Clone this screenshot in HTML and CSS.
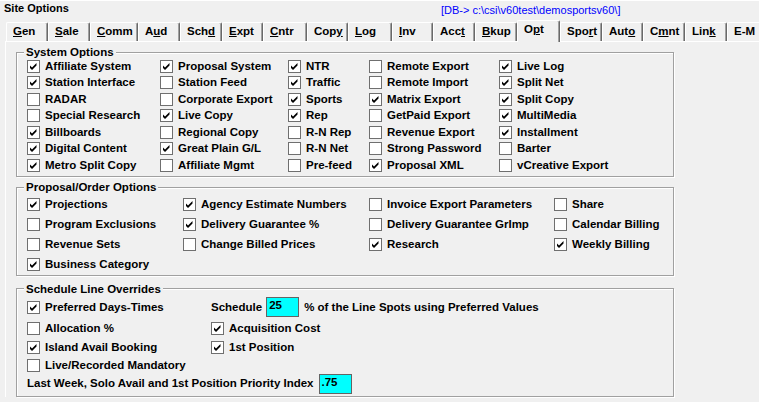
FILE: index.html
```html
<!DOCTYPE html>
<html>
<head>
<meta charset="utf-8">
<link rel="stylesheet" href="styles.css">
</head>
<body>
<div class="window">
  <div class="header">
    <div class="title">Site Options</div>
    <div class="path">[DB-&gt; c:\csi\v60test\demosportsv60\]</div>
  </div>
  <div class="tabs">
    <div class="tab w42"><u>G</u>en</div>
    <div class="tab w42"><u>S</u>ale</div>
    <div class="tab w48"><u>C</u>omm</div>
    <div class="tab w42">A<u>u</u>d</div>
    <div class="tab w42">Sch<u>d</u></div>
    <div class="tab w41"><u>E</u>xpt</div>
    <div class="tab w44"><u>C</u>ntr</div>
    <div class="tab w41">Cop<u>y</u></div>
    <div class="tab w44"><u>L</u>og</div>
    <div class="tab w41"><u>I</u>nv</div>
    <div class="tab w42">Acc<u>t</u></div>
    <div class="tab w42"><u>B</u>kup</div>
    <div class="tab w43 active">O<u>p</u>t</div>
    <div class="tab w42">Spo<u>r</u>t</div>
    <div class="tab w41">Aut<u>o</u></div>
    <div class="tab w42">C<u>m</u>nt</div>
    <div class="tab w42">Lin<u>k</u></div>
    <div class="tab w42">E-M</div>
  </div>
  <div class="panel">
    <div class="group g1">
      <div class="legend">System Options</div>
      <div class="grid sys">
        <label class="opt"><span class="cb"><svg viewBox="0 0 11 11"><polygon points="2,4.5 4,6.5 8.5,2 8.5,4.5 4,9 2,7"/></svg></span>Affiliate System</label>
        <label class="opt"><span class="cb"><svg viewBox="0 0 11 11"><polygon points="2,4.5 4,6.5 8.5,2 8.5,4.5 4,9 2,7"/></svg></span>Proposal System</label>
        <label class="opt"><span class="cb"><svg viewBox="0 0 11 11"><polygon points="2,4.5 4,6.5 8.5,2 8.5,4.5 4,9 2,7"/></svg></span>NTR</label>
        <label class="opt"><span class="cb"></span>Remote Export</label>
        <label class="opt"><span class="cb"><svg viewBox="0 0 11 11"><polygon points="2,4.5 4,6.5 8.5,2 8.5,4.5 4,9 2,7"/></svg></span>Live Log</label>

        <label class="opt"><span class="cb"><svg viewBox="0 0 11 11"><polygon points="2,4.5 4,6.5 8.5,2 8.5,4.5 4,9 2,7"/></svg></span>Station Interface</label>
        <label class="opt"><span class="cb"></span>Station Feed</label>
        <label class="opt"><span class="cb"><svg viewBox="0 0 11 11"><polygon points="2,4.5 4,6.5 8.5,2 8.5,4.5 4,9 2,7"/></svg></span>Traffic</label>
        <label class="opt"><span class="cb"></span>Remote Import</label>
        <label class="opt"><span class="cb"><svg viewBox="0 0 11 11"><polygon points="2,4.5 4,6.5 8.5,2 8.5,4.5 4,9 2,7"/></svg></span>Split Net</label>

        <label class="opt"><span class="cb"></span>RADAR</label>
        <label class="opt"><span class="cb"></span>Corporate Export</label>
        <label class="opt"><span class="cb"><svg viewBox="0 0 11 11"><polygon points="2,4.5 4,6.5 8.5,2 8.5,4.5 4,9 2,7"/></svg></span>Sports</label>
        <label class="opt"><span class="cb"><svg viewBox="0 0 11 11"><polygon points="2,4.5 4,6.5 8.5,2 8.5,4.5 4,9 2,7"/></svg></span>Matrix Export</label>
        <label class="opt"><span class="cb"><svg viewBox="0 0 11 11"><polygon points="2,4.5 4,6.5 8.5,2 8.5,4.5 4,9 2,7"/></svg></span>Split Copy</label>

        <label class="opt"><span class="cb"></span>Special Research</label>
        <label class="opt"><span class="cb"><svg viewBox="0 0 11 11"><polygon points="2,4.5 4,6.5 8.5,2 8.5,4.5 4,9 2,7"/></svg></span>Live Copy</label>
        <label class="opt"><span class="cb"><svg viewBox="0 0 11 11"><polygon points="2,4.5 4,6.5 8.5,2 8.5,4.5 4,9 2,7"/></svg></span>Rep</label>
        <label class="opt"><span class="cb"></span>GetPaid Export</label>
        <label class="opt"><span class="cb"><svg viewBox="0 0 11 11"><polygon points="2,4.5 4,6.5 8.5,2 8.5,4.5 4,9 2,7"/></svg></span>MultiMedia</label>

        <label class="opt"><span class="cb"><svg viewBox="0 0 11 11"><polygon points="2,4.5 4,6.5 8.5,2 8.5,4.5 4,9 2,7"/></svg></span>Billboards</label>
        <label class="opt"><span class="cb"></span>Regional Copy</label>
        <label class="opt"><span class="cb"></span>R-N Rep</label>
        <label class="opt"><span class="cb"></span>Revenue Export</label>
        <label class="opt"><span class="cb"><svg viewBox="0 0 11 11"><polygon points="2,4.5 4,6.5 8.5,2 8.5,4.5 4,9 2,7"/></svg></span>Installment</label>

        <label class="opt"><span class="cb"><svg viewBox="0 0 11 11"><polygon points="2,4.5 4,6.5 8.5,2 8.5,4.5 4,9 2,7"/></svg></span>Digital Content</label>
        <label class="opt"><span class="cb"><svg viewBox="0 0 11 11"><polygon points="2,4.5 4,6.5 8.5,2 8.5,4.5 4,9 2,7"/></svg></span>Great Plain G/L</label>
        <label class="opt"><span class="cb"></span>R-N Net</label>
        <label class="opt"><span class="cb"></span>Strong Password</label>
        <label class="opt"><span class="cb"></span>Barter</label>

        <label class="opt"><span class="cb"><svg viewBox="0 0 11 11"><polygon points="2,4.5 4,6.5 8.5,2 8.5,4.5 4,9 2,7"/></svg></span>Metro Split Copy</label>
        <label class="opt"><span class="cb"></span>Affiliate Mgmt</label>
        <label class="opt"><span class="cb"></span>Pre-feed</label>
        <label class="opt"><span class="cb"><svg viewBox="0 0 11 11"><polygon points="2,4.5 4,6.5 8.5,2 8.5,4.5 4,9 2,7"/></svg></span>Proposal XML</label>
        <label class="opt"><span class="cb"></span>vCreative Export</label>
      </div>
    </div>

    <div class="group g2">
      <div class="legend">Proposal/Order Options</div>
      <div class="grid prop">
        <label class="opt"><span class="cb"><svg viewBox="0 0 11 11"><polygon points="2,4.5 4,6.5 8.5,2 8.5,4.5 4,9 2,7"/></svg></span>Projections</label>
        <label class="opt"><span class="cb"><svg viewBox="0 0 11 11"><polygon points="2,4.5 4,6.5 8.5,2 8.5,4.5 4,9 2,7"/></svg></span>Agency Estimate Numbers</label>
        <label class="opt"><span class="cb"></span>Invoice Export Parameters</label>
        <label class="opt"><span class="cb"></span>Share</label>

        <label class="opt"><span class="cb"></span>Program Exclusions</label>
        <label class="opt"><span class="cb"><svg viewBox="0 0 11 11"><polygon points="2,4.5 4,6.5 8.5,2 8.5,4.5 4,9 2,7"/></svg></span>Delivery Guarantee %</label>
        <label class="opt"><span class="cb"></span>Delivery Guarantee GrImp</label>
        <label class="opt"><span class="cb"></span>Calendar Billing</label>

        <label class="opt"><span class="cb"></span>Revenue Sets</label>
        <label class="opt"><span class="cb"></span>Change Billed Prices</label>
        <label class="opt"><span class="cb"><svg viewBox="0 0 11 11"><polygon points="2,4.5 4,6.5 8.5,2 8.5,4.5 4,9 2,7"/></svg></span>Research</label>
        <label class="opt"><span class="cb"><svg viewBox="0 0 11 11"><polygon points="2,4.5 4,6.5 8.5,2 8.5,4.5 4,9 2,7"/></svg></span>Weekly Billing</label>

        <label class="opt"><span class="cb"><svg viewBox="0 0 11 11"><polygon points="2,4.5 4,6.5 8.5,2 8.5,4.5 4,9 2,7"/></svg></span>Business Category</label>
      </div>
    </div>

    <div class="group g3">
      <div class="legend">Schedule Line Overrides</div>
      <div class="grid sched">
        <label class="opt"><span class="cb"><svg viewBox="0 0 11 11"><polygon points="2,4.5 4,6.5 8.5,2 8.5,4.5 4,9 2,7"/></svg></span>Preferred Days-Times</label>
        <div class="inline"><span>Schedule</span><span class="field">25</span><span class="after">% of the Line Spots using Preferred Values</span></div>

        <label class="opt"><span class="cb"></span>Allocation %</label>
        <label class="opt"><span class="cb"><svg viewBox="0 0 11 11"><polygon points="2,4.5 4,6.5 8.5,2 8.5,4.5 4,9 2,7"/></svg></span>Acquisition Cost</label>

        <label class="opt"><span class="cb"><svg viewBox="0 0 11 11"><polygon points="2,4.5 4,6.5 8.5,2 8.5,4.5 4,9 2,7"/></svg></span>Island Avail Booking</label>
        <label class="opt"><span class="cb"><svg viewBox="0 0 11 11"><polygon points="2,4.5 4,6.5 8.5,2 8.5,4.5 4,9 2,7"/></svg></span>1st Position</label>

        <label class="opt span"><span class="cb"></span>Live/Recorded Mandatory</label>

        <div class="inline span last"><span>Last Week, Solo Avail and 1st Position Priority Index</span><span class="field">.75</span></div>
      </div>
    </div>
  </div>
</div>
</body>
</html>
```

FILE: styles.css
```css
html, body {
  margin: 0;
  padding: 0;
}
body {
  background: #f0f0f0;
  color: #000;
  font-family: "Liberation Sans", Arial, sans-serif;
  font-weight: bold;
  font-size: 11.5px;
  line-height: 13px;
  width: 759px;
  height: 402px;
  overflow: hidden;
}
.window {
  border-top: 1px solid #fff;
}
.header {
  display: grid;
  grid-template-columns: 441px auto;
  height: 19px;
  align-items: start;
}
.title {
  font-size: 11px;
  padding: 1px 0 0 4px;
}
.path {
  font-size: 11px;
  font-weight: normal;
  color: #0000ff;
  padding-top: 3px;
  white-space: nowrap;
}
.tabs {
  display: flex;
  align-items: flex-end;
  height: 21px;
  padding-left: 6px;
}
.tab {
  box-sizing: border-box;
  height: 19px;
  flex: none;
  padding: 2px 0 0 6px;
  border-top: 1px solid #fff;
  border-left: 1px solid #fff;
  border-right: 1px solid #696969;
  box-shadow: inset -1px 0 0 #a0a0a0;
  border-radius: 2px 2px 0 0;
  white-space: nowrap;
  background: #f0f0f0;
}
.tab.active {
  height: 22px;
  margin-bottom: -1px;
  position: relative;
  z-index: 1;
  padding-top: 2px;
}
.w41 { width: 41px; }
.w42 { width: 42px; }
.w43 { width: 43px; }
.w44 { width: 44px; }
.w48 { width: 48px; }
u {
  text-decoration: underline;
  text-underline-offset: 1px;
}
.panel {
  margin-left: 5px;
  border-top: 1px solid #fff;
  border-left: 1px solid #fff;
  padding: 10px 0 0 10px;
}
.group {
  box-sizing: border-box;
  width: 658px;
  border: 1px solid #a0a0a0;
  box-shadow: inset 1px 1px 0 #fff, 1px 1px 0 #fff;
}
.legend {
  width: fit-content;
  margin-left: 7px;
  padding: 0 2px;
  background: #f0f0f0;
  white-space: nowrap;
}
.g1 .legend { margin-top: -7px; margin-bottom: -1px; }
.g1 { padding-bottom: 3px; }
.g2 { margin-top: 10px; padding-bottom: 1px; }
.g2 .legend { margin-top: -7px; }
.g3 { margin-top: 12px; padding-bottom: 3px; }
.g3 .legend { margin-top: -6px; }

.grid {
  display: grid;
  padding-left: 10px;
  align-items: center;
}
.sys {
  grid-template-columns: 133px 128px 81px 130px auto;
  grid-template-rows: 16px 17px 16px 17px 16px 17px 16px;
}
.prop {
  grid-template-columns: 156px 186px 185px auto;
  grid-auto-rows: 20px;
}
.sched {
  grid-template-columns: 184px auto;
  grid-template-rows: 22px 20px 19px 17px 19px;
}
.span {
  grid-column: 1 / -1;
}
.opt {
  display: flex;
  align-items: center;
  gap: 5px;
  white-space: nowrap;
}
.cb {
  box-sizing: border-box;
  width: 13px;
  height: 13px;
  flex: none;
  background: #fff;
  border: 1px solid #6f6f6f;
  display: flex;
}
.cb svg {
  width: 11px;
  height: 11px;
  fill: #000;
}
.inline {
  display: flex;
  align-items: center;
  white-space: nowrap;
}
.field {
  box-sizing: border-box;
  width: 33px;
  height: 20px;
  margin-left: 4px;
  border: 1px solid #646464;
  background: #00ffff;
  padding: 1px 2px 0;
  align-self: center;
}
.after {
  margin-left: 5px;
}
.last .field {
  margin-left: 5px;
}
```
